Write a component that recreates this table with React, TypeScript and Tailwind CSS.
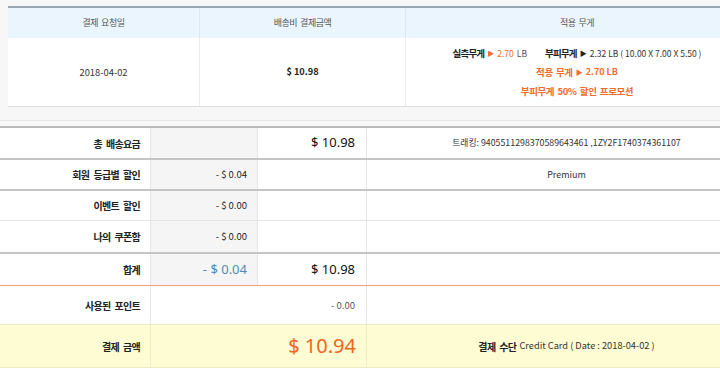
import React from "react";

const kr = { fontFamily: '"Noto Sans CJK KR", "Noto Sans", sans-serif' };
const num = { fontFamily: '"Noto Sans", "Noto Sans CJK KR", sans-serif' };

function Label({ children }: { children: React.ReactNode }) {
  return (
    <div className="flex items-center justify-end pr-[10px] font-bold text-[10px] tracking-[-0.7px] [word-spacing:2.5px] text-[#222]">
      {children}
    </div>
  );
}

export default function App() {
  return (
    <div className="w-[720px] h-[376px] overflow-hidden bg-[#f7f7f7] text-[#333] flex flex-col" style={kr}>
      {/* Top summary table */}
      <div className="pt-[6px] pl-[8px]">
        <div className="w-[740px] border-t-2 border-[#98a4ae] bg-white">
          <div className="grid grid-cols-[192px_206px_342px] h-[30px] bg-[#eaf5fd] text-[9px] tracking-[-0.5px] [word-spacing:1.5px] text-[#555]">
            <div className="flex items-center justify-center border-r border-[#e2e8ee]">결제 요청일</div>
            <div className="flex items-center justify-center border-r border-[#e2e8ee]">배송비 결제금액</div>
            <div className="flex items-center justify-center">적용 무게</div>
          </div>
          <div className="grid grid-cols-[192px_206px_342px] h-[69px] border-b border-[#dedede]">
            <div className="flex items-center justify-center border-r border-[#ebebeb] text-[9.4px] text-[#333]">2018-04-02</div>
            <div className="flex items-center justify-center border-r border-[#ebebeb] text-[9.2px] font-bold text-[#222]">$ 10.98</div>
            <div className="flex flex-col items-center justify-center gap-[5px] leading-[14px] text-[9px]">
              <div className="flex items-center whitespace-nowrap text-[8.5px]">
                <span className="font-bold text-[#222] text-[9.5px] tracking-[-0.8px]">실측무게</span>
                <span className="text-[#f26c2b] text-[7px] mx-[3px]">▶</span>
                <span className="text-[#f26c2b]">2.70</span>
                <span className="text-[#555] ml-[3px]">LB</span>
                <span className="font-bold text-[#222] ml-[18px] text-[9.5px] tracking-[-0.8px]">부피무게</span>
                <span className="text-[#222] text-[7px] mx-[3px]">▶</span>
                <span className="text-[#333]">2.32 LB ( 10.00 X 7.00 X 5.50 )</span>
              </div>
              <div className="font-bold text-[#f26c2b] flex items-center whitespace-nowrap">
                <span className="text-[9.5px] tracking-[-0.4px] [word-spacing:1.5px]">적용 무게</span>
                <span className="text-[7px] mx-[3px]">▶</span>2.70 LB
              </div>
              <div className="font-bold text-[#f26c2b] whitespace-nowrap text-[9.5px] tracking-[-0.4px] [word-spacing:1.5px]">부피무게 50% 할인 프로모션</div>
            </div>
          </div>
        </div>
      </div>
      <div className="h-[13px] shrink-0" />
      <div className="h-px bg-[#e8e8e8] shrink-0" />
      <div className="h-[5px] shrink-0" />

      {/* Lower payment table */}
      <div className="flex-1 bg-white">
        <div className="w-[766px] border-t-2 border-[#b9b9b9] bg-white text-[9px]">
          {/* Row 1 */}
          <div className="grid grid-cols-[150px_108px_108px_400px] h-[32px] border-b-2 border-[#c4c4c4]">
            <Label>총 배송요금</Label>
            <div className="bg-[#f5f5f5] border-x border-[#e6e6e6]" />
            <div className="flex items-center justify-end pr-[11px] text-[13px] text-[#111]" style={num}>$ 10.98</div>
            <div className="flex items-center justify-center border-l border-[#e6e6e6] text-[8.8px] text-[#333]">
              트래킹: 9405511298370589643461 ,1ZY2F1740374361107
            </div>
          </div>
          {/* Row 2 */}
          <div className="grid grid-cols-[150px_108px_108px_400px] h-[31px] border-b-2 border-[#c4c4c4]">
            <Label>회원 등급별 할인</Label>
            <div className="flex items-center justify-end pr-[10px] bg-[#f5f5f5] border-x border-[#e6e6e6] text-[9.5px] text-[#222]">- $ 0.04</div>
            <div />
            <div className="flex items-center justify-center border-l border-[#e6e6e6] text-[9px] text-[#333]">Premium</div>
          </div>
          {/* Row 3 */}
          <div className="grid grid-cols-[150px_108px_108px_400px] h-[30px] border-b border-[#e3e3e3]">
            <Label>이벤트 할인</Label>
            <div className="flex items-center justify-end pr-[10px] bg-[#f5f5f5] border-x border-[#e6e6e6] text-[9.5px] text-[#222]">- $ 0.00</div>
            <div />
            <div className="border-l border-[#e6e6e6]" />
          </div>
          {/* Row 4 */}
          <div className="grid grid-cols-[150px_108px_108px_400px] h-[33px] border-b-2 border-[#c4c4c4]">
            <Label>나의 쿠폰함</Label>
            <div className="flex items-center justify-end pr-[10px] bg-[#f5f5f5] border-x border-[#e6e6e6] text-[9.5px] text-[#222]">- $ 0.00</div>
            <div />
            <div className="border-l border-[#e6e6e6]" />
          </div>
          {/* Row 5 */}
          <div className="grid grid-cols-[150px_108px_108px_400px] h-[32px] border-b border-[#f3a17e]">
            <Label>합계</Label>
            <div className="flex items-center justify-end pr-[10px] bg-[#f5f5f5] border-x border-[#e6e6e6] text-[13px] text-[#4b8db5]" style={num}>- $ 0.04</div>
            <div className="flex items-center justify-end pr-[11px] text-[13px] text-[#111]" style={num}>$ 10.98</div>
            <div className="border-l border-[#e6e6e6]" />
          </div>
          {/* Row 6 */}
          <div className="grid grid-cols-[150px_216px_400px] h-[38px]">
            <Label>사용된 포인트</Label>
            <div className="flex items-center justify-end pr-[11px] border-l border-[#e6e6e6] text-[9.5px] text-[#555]">- 0.00</div>
            <div className="border-l border-[#e6e6e6]" />
          </div>
          {/* Row 7 */}
          <div className="grid grid-cols-[150px_216px_400px] h-[44px] bg-[#fefcd2] border-y border-[#ecebc8]">
            <Label>결제 금액</Label>
            <div className="flex items-center justify-end pr-[10px] border-l border-[#efedc8] text-[20px] text-[#f0651f]" style={num}>$ 10.94</div>
            <div className="flex items-center justify-center border-l border-[#efedc8] text-[9.25px] text-[#333]">
              <span className="font-bold text-[#222] mr-[3px] text-[10px] tracking-[-0.6px] [word-spacing:2px]">결제 수단</span>Credit Card ( Date : 2018-04-02 )
            </div>
          </div>
        </div>
      </div>
    </div>
  );
}
